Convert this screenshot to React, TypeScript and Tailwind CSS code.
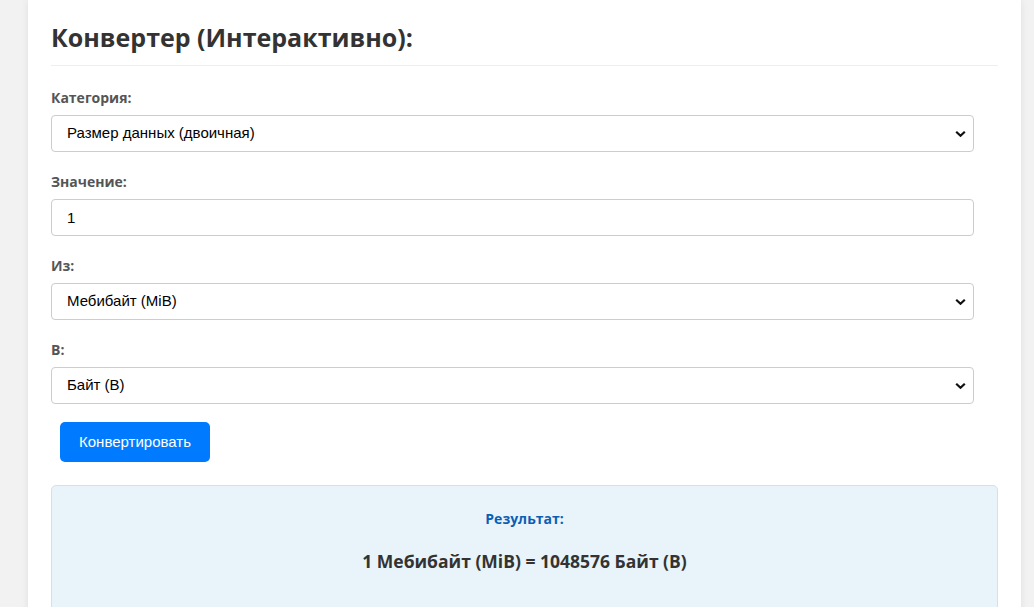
import React, { useState } from 'react';

const units = [
  { id: 'B', name: 'Байт (B)', f: 1 },
  { id: 'KiB', name: 'Кибибайт (KiB)', f: 1024 },
  { id: 'MiB', name: 'Мебибайт (MiB)', f: 1024 ** 2 },
  { id: 'GiB', name: 'Гибибайт (GiB)', f: 1024 ** 3 },
];

function Chevron() {
  return (
    <svg
      className="pointer-events-none absolute right-[8px] top-1/2 -translate-y-1/2"
      width="11"
      height="7"
      viewBox="0 0 11 7"
    >
      <path d="M1.2 1.2 L5.5 5.3 L9.8 1.2" fill="none" stroke="#111" strokeWidth="2.2" />
    </svg>
  );
}

function Field({ label, children }: { label: string; children: React.ReactNode }) {
  return (
    <div className="mb-[20px]">
      <label className="block text-[14px] leading-[20px] font-bold text-[#555] mb-[7px]">{label}</label>
      {children}
    </div>
  );
}

const boxCls =
  "w-[923px] h-[37px] rounded-[4px] border border-[#ccc] bg-white pl-[15px] pr-[30px] text-[15px] text-black appearance-none outline-none font-['Liberation_Sans',Arial,sans-serif]";

export default function App() {
  const [category, setCategory] = useState('bin');
  const [value, setValue] = useState('1');
  const [from, setFrom] = useState('MiB');
  const [to, setTo] = useState('B');
  const [result, setResult] = useState('1 Мебибайт (MiB) = 1048576 Байт (B)');

  const convert = () => {
    const a = units.find((u) => u.id === from)!;
    const b = units.find((u) => u.id === to)!;
    const r = (parseFloat(value) * a.f) / b.f;
    setResult(`${value} ${a.name} = ${r} ${b.name}`);
  };

  return (
    <div className="min-h-screen bg-[#f2f2f2] font-['Open_Sans',sans-serif] text-[#333]">
      <div className="ml-[28px] w-[993px] bg-white shadow-[0_0_8px_rgba(0,0,0,0.08)] px-[23px] pt-[15px] pb-[40px]">
        <h2 className="text-[25px] leading-[44px] font-bold text-[#333] pb-[6px] border-b border-[#eee] mb-[22px]">
          Конвертер (Интерактивно):
        </h2>

        <Field label="Категория:">
          <div className="relative w-[923px]">
            <select className={boxCls} value={category} onChange={(e) => setCategory(e.target.value)}>
              <option value="bin">Размер данных (двоичная)</option>
              <option value="dec">Размер данных (десятичная)</option>
            </select>
            <Chevron />
          </div>
        </Field>

        <Field label="Значение:">
          <input className={boxCls} value={value} onChange={(e) => setValue(e.target.value)} />
        </Field>

        <Field label="Из:">
          <div className="relative w-[923px]">
            <select className={boxCls} value={from} onChange={(e) => setFrom(e.target.value)}>
              {units.map((u) => (
                <option key={u.id} value={u.id}>{u.name}</option>
              ))}
            </select>
            <Chevron />
          </div>
        </Field>

        <div className="mb-[18px]">
          <label className="block text-[14px] leading-[20px] font-bold text-[#555] mb-[7px]">В:</label>
          <div className="relative w-[923px]">
            <select className={boxCls} value={to} onChange={(e) => setTo(e.target.value)}>
              {units.map((u) => (
                <option key={u.id} value={u.id}>{u.name}</option>
              ))}
            </select>
            <Chevron />
          </div>
        </div>

        <button
          onClick={convert}
          className="ml-[9px] w-[150px] h-[40px] rounded-[5px] bg-[#007bff] text-white text-[15px] font-['Liberation_Sans',Arial,sans-serif]"
        >
          Конвертировать
        </button>

        <div className="mt-[23px] rounded-[5px] border border-[#cde3ee] bg-[#e8f4fa] pt-[20px] pb-[40px] text-center min-h-[140px]">
          <div className="text-[14px] leading-[26px] font-bold text-[#0a5fb4]">Результат:</div>
          <div className="mt-[14px] text-[17.5px] leading-[30px] font-bold text-[#333]">{result}</div>
        </div>
      </div>
    </div>
  );
}
